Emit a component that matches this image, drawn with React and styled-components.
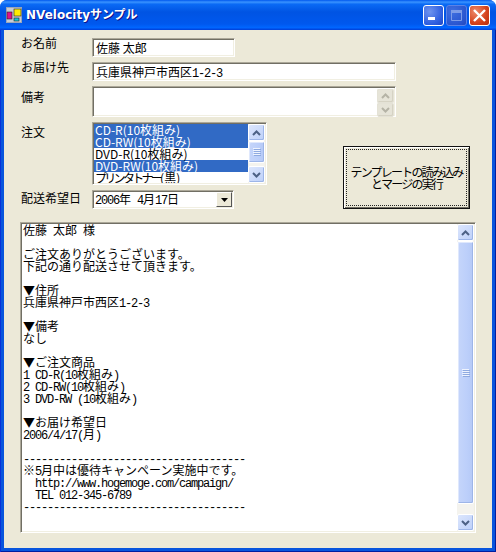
import React from "react";
import styled, { createGlobalStyle } from "styled-components";

const UI_FONT = `"Noto Sans CJK JP", "Liberation Sans", sans-serif`;

const GlobalStyle = createGlobalStyle`
  html, body {
    margin: 0;
    padding: 0;
    background: #fff;
  }
  * {
    box-sizing: border-box;
  }
`;

const Window = styled.div`
  width: 496px;
  height: 552px;
  display: flex;
  flex-direction: column;
  background: #0855dd;
  border-radius: 7px 7px 0 0;
  overflow: hidden;
  font-family: ${UI_FONT};
  font-size: 12px;
  color: #000;
`;

const TitleBar = styled.div`
  height: 30px;
  flex: none;
  display: flex;
  align-items: center;
  padding: 0 6px 0 6px;
  background: linear-gradient(
    180deg,
    #0058ee 0%,
    #3a93ff 7%,
    #0a6af5 14%,
    #0054e3 40%,
    #0058ee 80%,
    #0066ff 92%,
    #003dd7 100%
  );
`;

const TitleText = styled.span`
  margin-left: 4px;
  flex: 1;
  color: #fff;
  font-family: "DejaVu Sans", ${UI_FONT};
  font-size: 12px;
  font-weight: bold;
  text-shadow: 1px 1px 0 #0f1089;
  line-height: 16px;
`;

const CaptionButton = styled.div`
  width: 21px;
  height: 21px;
  margin-left: 2px;
  border: 1px solid ${(p) => (p.$disabled ? "#5b82e6" : "#fff")};
  border-radius: 3px;
  display: flex;
  align-items: center;
  justify-content: center;
  background: ${(p) =>
    p.$close
      ? "radial-gradient(circle at 30% 30%, #ee8a6b, #d4421c 60%, #b62f10)"
      : p.$disabled
      ? "radial-gradient(circle at 30% 30%, #3f6fe0, #2a56d0 70%, #2348bd)"
      : "radial-gradient(circle at 30% 30%, #6f94ee, #2f5fe0 65%, #1f47c4)"};
`;

const Frame = styled.div`
  flex: 1;
  display: flex;
  padding: 0 4px 4px 4px;
  background: #0855dd;
  box-shadow: inset 1px 0 0 #0831d9, inset -1px -1px 0 #001ea0;
  min-height: 0;
`;

const Client = styled.div`
  flex: 1;
  background: #ece9d8;
  padding: 8px 16px 0 16px;
  display: flex;
  flex-direction: column;
`;

const FormGrid = styled.div`
  display: grid;
  grid-template-columns: 71px 251px 127px;
  grid-template-rows: 19px 19px 31px 63px 19px;
  row-gap: 5px;
  padding-left: 1px;
`;

const Label = styled.label`
  grid-column: 1;
  line-height: 12px;
  margin-top: ${(p) => p.$offset}px;
`;

const sunken = `
  border: 1px solid;
  border-color: #aca899 #fff #fff #aca899;
  box-shadow: inset 1px 1px 0 #716f64, inset -1px -1px 0 #f1efe2;
  padding: 1px;
  background: #fff;
`;

const TextBox = styled.div`
  ${sunken}
  grid-column: ${(p) => (p.$wide ? "2 / 4" : "2")};
  width: ${(p) => p.$width}px;
  padding: 1px 0 0 3px;
  line-height: 15px;
  font-size: 12px;
  white-space: pre;
`;

const MemoBox = styled(TextBox)`
  display: flex;
  justify-content: flex-end;
  padding: 2px 1px 2px 0;
`;

const ListBox = styled.div`
  ${sunken}
  grid-column: 2;
  width: 175px;
  display: flex;
  overflow: hidden;
`;

const ListItems = styled.div`
  flex: 1;
  height: 59px;
  overflow: hidden;
`;

const ListItem = styled.div`
  height: 12px;
  line-height: 12px;
  padding-left: 1px;
  white-space: pre;
  background: ${(p) => (p.$selected ? "#316ac5" : "transparent")};
  color: ${(p) => (p.$selected ? "#fff" : "#000")};
`;

const TightKana = styled.span`
  letter-spacing: -2.7px;
`;

const DateBox = styled.div`
  ${sunken}
  grid-column: 2;
  width: 142px;
  display: flex;
  align-items: center;
  justify-content: space-between;
  padding: 1px 1px 1px 2px;
  line-height: 15px;
  white-space: pre;
`;

const DropButton = styled.div`
  width: 16px;
  height: 15px;
  background: #ece9d8;
  border-style: solid;
  border-width: 1px;
  border-color: #fff #555 #555 #fff;
  display: flex;
  align-items: center;
  justify-content: center;
`;

const RunButton = styled.button`
  grid-column: 3;
  grid-row: 4 / 6;
  align-self: end;
  height: 63px;
  width: 127px;
  padding: 2px;
  margin: 0;
  font-family: ${UI_FONT};
  font-size: 12px;
  line-height: 12px;
  color: #000;
  background: #ece9d8;
  border: 1px solid #111;
  box-shadow: inset 1px 1px 0 #fff, inset -1px -1px 0 #716f64;
  outline: none;
  display: flex;
`;

const FocusRect = styled.span`
  flex: 1;
  border: 1px dotted #222;
  display: flex;
  align-items: center;
  justify-content: center;
  text-align: center;
  white-space: nowrap;
  letter-spacing: -1.8px;
`;

const OutputBox = styled.div`
  ${sunken}
  margin-top: 13px;
  width: 456px;
  height: 311px;
  display: flex;
`;

const OutputText = styled.div`
  flex: 1;
  padding: 0 0 0 1px;
  line-height: 12px;
  font-size: 12px;
  min-width: 0;
`;

const OutputLine = styled.div`
  height: 12px;
  white-space: pre;
`;

const Half = styled.span`
  font-family: "Liberation Mono", monospace;
  font-size: 12px;
  letter-spacing: -1.2px;
`;

const ScrollBar = styled.div`
  width: 17px;
  flex: none;
  display: flex;
  flex-direction: column;
  background: ${(p) => (p.$disabled ? "#f2f1ea" : "#f4f3ee")};
`;

const ScrollButton = styled.div`
  flex: none;
  height: ${(p) => p.$size || 17}px;
  border: 1px solid ${(p) => (p.$disabled ? "#e4e2d6" : "#fff")};
  border-radius: 2px;
  background: ${(p) => (p.$disabled ? "#e6e4d8" : "linear-gradient(135deg, #dce6fd, #bdd0f9)")};
  box-shadow: inset -1px -1px 0 ${(p) => (p.$disabled ? "#d6d3c4" : "#9db5e8")};
  display: flex;
  align-items: center;
  justify-content: center;
`;

const ScrollThumb = styled.div`
  height: ${(p) => p.$size}px;
  flex: none;
  background: linear-gradient(90deg, #c5d5fa, #bccffa 60%, #b5c9f6);
  border: 1px solid #fff;
  border-radius: 2px;
  box-shadow: inset -1px -1px 0 #9db5e8, inset 1px 1px 0 #dfe8fd;
  display: flex;
  align-items: center;
  justify-content: center;
`;

const ScrollTrack = styled.div`
  flex: 1;
`;

const ORDER_ITEMS = [
  { name: "CD-R(10枚組み)", selected: true },
  { name: "CD-RW(10枚組み)", selected: true },
  { name: "DVD-R(10枚組み)", selected: false },
  { name: "DVD-RW(10枚組み)", selected: true },
  { kana: "プリンタトナー", name: "(黒)", selected: false },
];

const RULE = "-".repeat(37);

const OUTPUT_LINES = [
  "佐藤 太郎 様",
  "",
  "ご注文ありがとうございます。",
  "下記の通り配送させて頂きます。",
  "",
  "▼住所",
  "兵庫県神戸市西区1-2-3",
  "",
  "▼備考",
  "なし",
  "",
  "▼ご注文商品",
  "1 CD-R(10枚組み)",
  "2 CD-RW(10枚組み)",
  "3 DVD-RW (10枚組み)",
  "",
  "▼お届け希望日",
  "2006/4/17(月)",
  "",
  RULE,
  "※5月中は優待キャンペーン実施中です。",
  "  http://www.hogemoge.com/campaign/",
  "  TEL 012-345-6789",
  RULE,
];

// half width runs are set 6px wide, like MS Gothic
function halfWidth(text) {
  return text.split(/([\x20-\x7e]+)/).map((part, i) =>
    i % 2 ? <Half key={i}>{part}</Half> : part
  );
}

function Arrow({ down, color = "#4d6185" }) {
  return (
    <svg width="9" height="6" viewBox="0 0 9 6">
      <path
        d={down ? "M1 1 L4.5 4.5 L8 1" : "M1 5 L4.5 1.5 L8 5"}
        fill="none"
        stroke={color}
        strokeWidth="2"
      />
    </svg>
  );
}

function Grip() {
  return (
    <svg width="8" height="8" viewBox="0 0 8 8">
      <path d="M0 .5H7M0 2.5H7M0 4.5H7M0 6.5H7" stroke="#eef3fe" />
      <path d="M1 1.5H8M1 3.5H8M1 5.5H8M1 7.5H8" stroke="#8faae0" />
    </svg>
  );
}

function AppIcon() {
  return (
    <svg width="16" height="16" viewBox="0 0 16 16" style={{ flex: "none" }}>
      <rect x="0" y="0" width="16" height="16" fill="#9aa6b8" />
      <rect x="1" y="1" width="14" height="14" fill="#c8ccd4" />
      <rect x="1" y="5" width="5" height="7" fill="#e0108a" stroke="#222" strokeWidth="0.6" />
      <rect x="8" y="2" width="7" height="7" fill="#ffee00" stroke="#222" strokeWidth="0.6" />
      <rect x="8" y="11" width="5" height="3" fill="#12c8d8" stroke="#222" strokeWidth="0.6" />
    </svg>
  );
}

export default function App() {
  return (
    <>
      <GlobalStyle />
      <Window>
        <TitleBar>
          <AppIcon />
          <TitleText>NVelocityサンプル</TitleText>
          <CaptionButton>
            <svg width="13" height="13" viewBox="0 0 13 13">
              <rect x="1" y="8" width="7" height="3" fill="#fff" />
            </svg>
          </CaptionButton>
          <CaptionButton $disabled>
            <svg width="13" height="13" viewBox="0 0 13 13">
              <path d="M1.5 1.5H11.5V11.5H1.5Z" fill="none" stroke="#7d9ce8" />
              <rect x="1" y="1" width="11" height="3" fill="#7d9ce8" />
            </svg>
          </CaptionButton>
          <CaptionButton $close>
            <svg width="15" height="15" viewBox="0 0 15 15">
              <path d="M2 2L13 13M13 2L2 13" stroke="#fff" strokeWidth="2.4" />
            </svg>
          </CaptionButton>
        </TitleBar>
        <Frame>
          <Client>
            <FormGrid>
              <Label $offset={-1}>お名前</Label>
              <TextBox $width={143}>佐藤 太郎</TextBox>
              <Label $offset={-1}>お届け先</Label>
              <TextBox $wide $width={304}>{halfWidth("兵庫県神戸市西区1-2-3")}</TextBox>
              <Label $offset={5}>備考</Label>
              <MemoBox $wide $width={304}>
                <ScrollBar $disabled>
                  <ScrollButton $disabled $size={14}>
                    <Arrow color="#b5b3a6" />
                  </ScrollButton>
                  <ScrollTrack />
                  <ScrollButton $disabled $size={14}>
                    <Arrow down color="#b5b3a6" />
                  </ScrollButton>
                </ScrollBar>
              </MemoBox>
              <Label $offset={4}>注文</Label>
              <ListBox>
                <ListItems>
                  {ORDER_ITEMS.map((item) => (
                    <ListItem key={item.name} $selected={item.selected}>
                      {item.kana && <TightKana>{item.kana}</TightKana>}
                      {item.name}
                    </ListItem>
                  ))}
                </ListItems>
                <ScrollBar>
                  <ScrollButton>
                    <Arrow />
                  </ScrollButton>
                  <ScrollThumb $size={22}>
                    <Grip />
                  </ScrollThumb>
                  <ScrollTrack />
                  <ScrollButton>
                    <Arrow down />
                  </ScrollButton>
                </ScrollBar>
              </ListBox>
              <RunButton type="button">
                <FocusRect>
                  テンプレートの読み込み
                  <br />
                  とマージの実行
                </FocusRect>
              </RunButton>
              <Label $offset={2}>配送希望日</Label>
              <DateBox>
                <span>{halfWidth("2006年 4月17日")}</span>
                <DropButton>
                  <svg width="7" height="4" viewBox="0 0 7 4">
                    <path d="M0 0H7L3.5 4Z" fill="#000" />
                  </svg>
                </DropButton>
              </DateBox>
            </FormGrid>
            <OutputBox>
              <OutputText>
                {OUTPUT_LINES.map((line, i) => (
                  <OutputLine key={i}>{halfWidth(line)}</OutputLine>
                ))}
              </OutputText>
              <ScrollBar>
                <ScrollButton>
                  <Arrow />
                </ScrollButton>
                <ScrollThumb $size={263}>
                  <Grip />
                </ScrollThumb>
                <ScrollTrack />
                <ScrollButton>
                  <Arrow down />
                </ScrollButton>
              </ScrollBar>
            </OutputBox>
          </Client>
        </Frame>
      </Window>
    </>
  );
}
